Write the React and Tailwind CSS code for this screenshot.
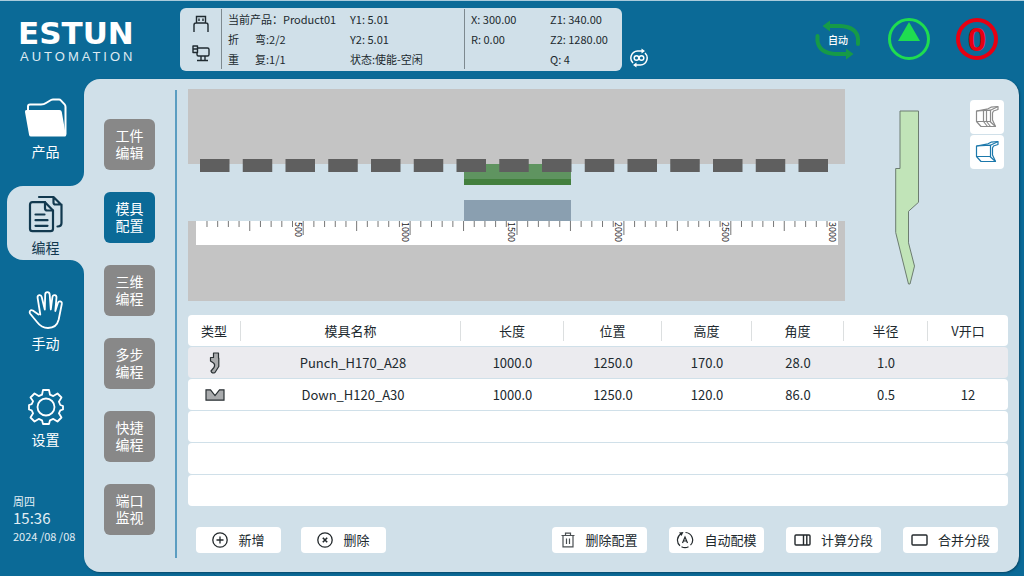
import { useState } from 'react';

const NAV_ITEMS = [
  { id: 'product', label: '产品', icon: FolderIcon },
  { id: 'program', label: '编程', icon: DocsIcon },
  { id: 'manual', label: '手动', icon: HandIcon },
  { id: 'settings', label: '设置', icon: GearIcon },
];

const MENU_ITEMS = [
  ['工件', '编辑'],
  ['模具', '配置'],
  ['三维', '编程'],
  ['多步', '编程'],
  ['快捷', '编程'],
  ['端口', '监视'],
];

const COLUMNS = [
  { label: '类型', width: 'w-[53px]' },
  { label: '模具名称', width: 'w-[220px]' },
  { label: '长度', width: 'w-[103px]' },
  { label: '位置', width: 'w-[98px]' },
  { label: '高度', width: 'w-[90px]' },
  { label: '角度', width: 'w-[92px]' },
  { label: '半径', width: 'w-[84px]' },
  { label: 'V开口', width: 'w-[80px]' },
];

const TOOLS = [
  { icon: PunchIcon, values: ['Punch_H170_A28', '1000.0', '1250.0', '170.0', '28.0', '1.0', ''] },
  { icon: DieIcon, values: ['Down_H120_A30', '1000.0', '1250.0', '120.0', '86.0', '0.5', '12'] },
];

const EMPTY_ROWS = 3;

function FolderIcon() {
  return (
    <svg width="44" height="40" viewBox="0 0 44 40" fill="none">
      <path d="M4 14V9.500q0-2 2-2h11q3 0 5-1.500l5-3q1-.600 2-.600h6q1 0 1.600.800l4 4.200q.900 1 .900 2.500V37q0 1-1 1.500" stroke="#fff" strokeWidth="2" />
      <path d="M2.500 13h33q2 0 2.300 2l4 23q.200 1.500-1.500 1.500H7q-1.600 0-1.900-1.500L1 15q-.300-2 1.500-2z" fill="#fff" />
    </svg>
  );
}

function DocsIcon() {
  return (
    <svg width="36" height="38" viewBox="0 0 36 38" fill="none" stroke="#12394f" strokeWidth="2.200" strokeLinecap="round" strokeLinejoin="round">
      <path d="M17 7.200H4.500q-2.500 0-2.500 2.500v24q0 2.500 2.500 2.500h18q2.500 0 2.500-2.500V15.500z" />
      <path d="M17 7.200v6q0 2.300 2.300 2.300H25M7.500 19.500h9M7.500 25.200h12M7.500 30.800h12" />
      <path d="M11 2h14.500l8 8v18q0 3.500-4 3.500M25.500 2v5.500q0 2 2 2h6" />
    </svg>
  );
}

function HandIcon() {
  return (
    <svg width="36" height="38" viewBox="0 0 36 38" fill="none" stroke="#fff" strokeWidth="1.800" strokeLinecap="round" strokeLinejoin="round">
      <path d="M10.500 23.500 4.800 19.600C2.500 18.200.900 20.500 2 22.500L9 31c3 4 6 6 11 6 6 0 9.500-3.500 10.700-8.500L33.800 13c.500-3-3.200-3.600-4-.800L27.300 20l1.200-13.500c.200-3-3.700-3.300-4.100-.300L22.800 18.500 21.700 3.600c-.300-3.200-4.400-3.200-4.500 0L16.800 18.500 13.700 6c-.700-2.900-4.500-2.100-4.100.800l2.700 16.700" />
    </svg>
  );
}

function GearIcon() {
  return (
    <svg width="36" height="36" viewBox="0 0 36 36" fill="none" stroke="#fff" strokeWidth="1.800" strokeLinejoin="round">
      <path d="M15 1h6l1 4.700 3.300 1.400L29.500 4.500l4 4-2.600 4.200 1.400 3.300L35 17v3.500l-2.700.800-1.400 3 2.600 4.200-4 4-4.200-2.600-3.300 1.400L21 35h-6l-1-3.700-3.300-1.400L6.500 32.500l-4-4 2.600-4.200-1.400-3L1 20.500V16l2.700-.800 1.400-3L2.500 8.500l4-4 4.200 2.600L14 5.700z" />
      <circle cx="18" cy="18" r="8.500" />
    </svg>
  );
}

function UsbIcon() {
  return (
    <svg width="18" height="18" viewBox="0 0 18 18" fill="none" stroke="#1f2a30" strokeWidth="1.400">
      <path d="M4.500 8V1.500h9V8M2 17v-7q0-2 2-2h10q2 0 2 2v7" />
      <path d="M7 3.500V6M11 3.500V6" />
    </svg>
  );
}

function NetworkIcon() {
  return (
    <svg width="18" height="18" viewBox="0 0 18 18" fill="none" stroke="#1f2a30" strokeWidth="1.400" strokeLinejoin="round">
      <path d="M6 3h9.500q1.500 0 1.500 1.500v5q0 1.500-1.500 1.500H6.500q-1.500 0-1.500-1.500V8M9 11v4M13 11v4M5 15.500h11" />
      <path d="M1 1h4.500v6.500H1zM1 4h4.500" />
    </svg>
  );
}

function LoopIcon() {
  return (
    <svg width="20" height="20" viewBox="0 0 20 20" fill="none" stroke="#fff" strokeWidth="1.500">
      <path d="M14 3H8.500a7 7 0 0 0-4.500 12M6 17h5.500A7 7 0 0 0 16 5" />
      <path d="M12.500.500 16 3l-3.500 2.500zM7.500 14.500 4 17l3.500 2.500z" fill="#fff" stroke="none" />
      <circle cx="7.500" cy="10" r="2.300" />
      <circle cx="12.500" cy="10" r="2.300" />
    </svg>
  );
}

function AutoArrows() {
  return (
    <svg width="48" height="42" viewBox="0 0 48 42" fill="none" stroke="#169a48" strokeWidth="4" strokeLinecap="round">
      <path d="M15 8h11q17 1 18 13v5" />
      <path d="M33 36H22Q5 35 3.500 23v-5" />
      <path d="M8.500 8 16 2.500v11zM39.500 36 32 30.500v11z" fill="#169a48" stroke="none" />
    </svg>
  );
}

function PunchIcon() {
  return (
    <svg width="12" height="22" viewBox="0 0 12 22" fill="#a9abad" stroke="#2a3134" strokeWidth="1.200" strokeLinejoin="round" className="mx-auto">
      <path d="M4.500 1h5v5h.300v8.500L6 20.500q-3 1.500-4-1.500l3-3.500q1.500-3-.500-4.500L1.500 9V5.500h3z" />
    </svg>
  );
}

function DieIcon() {
  return (
    <svg width="20" height="12" viewBox="0 0 20 12" fill="#a9abad" stroke="#2a3134" strokeWidth="1.200" className="mx-auto">
      <path d="M1 .800h4.500L10 6.500 14.500.800H19v10.400H1z" />
    </svg>
  );
}

function SegmentedToolIcon({ segmented }) {
  return (
    <svg width="24" height="24" viewBox="0 0 24 24" fill="none" stroke={segmented ? '#8b8b8b' : '#1c78ab'} strokeWidth="1.200" strokeLinejoin="round">
      <path d="M1.500 6 13 3.800 16 2.200l7-.700v3L18.500 6l-1 2v7l3 6.500H6l-4.500-5z" />
      <path d="M1.500 16.500H15l5.500 5M15.500 16.500V5.200L1.500 6M15.500 5.200 23 1.500" />
      {segmented && <path d="M8.500 4.800v11.700l4 5M11.500 4.300v12.200l4 5" />}
    </svg>
  );
}

function PlusCircleIcon() {
  return (
    <svg width="16" height="16" viewBox="0 0 16 16" fill="none" stroke="#23292c" strokeWidth="1.300">
      <circle cx="8" cy="8" r="7.200" />
      <path d="M8 4.500v7M4.500 8h7" />
    </svg>
  );
}

function CloseCircleIcon() {
  return (
    <svg width="16" height="16" viewBox="0 0 16 16" fill="none" stroke="#23292c" strokeWidth="1.300">
      <circle cx="8" cy="8" r="7.200" />
      <path d="m5.800 5.800 4.400 4.400M10.200 5.800l-4.400 4.400" strokeWidth="1.600" />
    </svg>
  );
}

function TrashIcon() {
  return (
    <svg width="14" height="16" viewBox="0 0 14 16" fill="none" stroke="#4a4f52" strokeWidth="1.200">
      <path d="M.500 3.500h13M4.500 3.500V1.200h5v2.300M2 3.500v11.300h10V3.500M5.500 6.500v5.500M8.500 6.500v5.500" />
    </svg>
  );
}

function AutoMatchIcon() {
  return (
    <svg width="18" height="18" viewBox="0 0 18 18" fill="none" stroke="#23292c" strokeWidth="1.200">
      <path d="M9.500 1.500a7.500 7.500 0 0 1 5 12.700M12.500 15.700a7.500 7.500 0 0 1-7 0M4 14.700A7.500 7.500 0 0 1 5 2.700" />
      <path d="M3 1.500 7.500 1 5.500 5z" fill="#23292c" stroke="none" />
      <path d="m6.500 12 2.500-6 2.500 6M7.300 10h3.400" />
    </svg>
  );
}

function SplitIcon() {
  return (
    <svg width="17" height="12" viewBox="0 0 17 12" fill="none" stroke="#23292c" strokeWidth="1.400">
      <rect x="1" y="1" width="15" height="10" rx="1" />
      <path d="M9.500 1v10M12.800 1v10" />
    </svg>
  );
}

function MergeIcon() {
  return (
    <svg width="17" height="12" viewBox="0 0 17 12" fill="none" stroke="#23292c" strokeWidth="1.400">
      <rect x="1" y="1" width="15" height="10" rx="1" />
    </svg>
  );
}

function StatusCard() {
  return (
    <div className="flex items-stretch rounded-md bg-[#d0e0e9] pt-px pb-0.5 text-[11px] leading-5 text-[#20292e]">
      <div className="flex w-[42px] flex-col items-center justify-around border-r border-[#7d898f]">
        <UsbIcon />
        <NetworkIcon />
      </div>
      <div className="w-[120px] pl-1.5 whitespace-nowrap">
        <p>当前产品：Product01</p>
        <p className="flex gap-4"><span>折</span><span>弯:2/2</span></p>
        <p className="flex gap-4"><span>重</span><span>复:1/1</span></p>
      </div>
      <div className="w-[123px] border-r border-[#7d898f] pl-2">
        <p>Y1: 5.01</p>
        <p>Y2: 5.01</p>
        <p>状态:使能-空闲</p>
      </div>
      <div className="w-[79px] pl-1.5">
        <p>X: 300.00</p>
        <p>R: 0.00</p>
      </div>
      <div className="w-[78px] pl-1.5">
        <p>Z1: 340.00</p>
        <p>Z2: 1280.00</p>
        <p>Q: 4</p>
      </div>
    </div>
  );
}

function Header() {
  return (
    <header className="flex h-[78px] items-start pr-[26px]">
      <div className="w-[180px] shrink-0 pt-4 pl-[18px] text-white">
        <h1 className="font-['DejaVu_Sans',sans-serif] text-[31px] leading-8 font-bold">ESTUN</h1>
        <p className="pl-0.5 font-['Liberation_Sans',sans-serif] text-[13px] leading-4 tracking-[3px] text-[#dfebf2]">AUTOMATION</p>
      </div>
      <div className="pt-[7px]">
        <StatusCard />
      </div>
      <button aria-label="循环" className="mt-[47px] ml-[7px]">
        <LoopIcon />
      </button>
      <div className="ml-auto flex items-center gap-[26px] pt-[17px]">
        <button className="relative">
          <AutoArrows />
          <span className="absolute inset-0 flex items-center justify-center text-[10px] font-medium text-white">自动</span>
        </button>
        <button aria-label="启动">
          <svg width="42" height="42" viewBox="0 0 42 42">
            <circle cx="21" cy="21" r="19.500" fill="none" stroke="#1fdc50" strokeWidth="3" />
            <path d="M21 4 32 23H10z" fill="#1fdc50" />
          </svg>
        </button>
        <button className="flex size-[42px] items-center justify-center rounded-full border-4 border-[#e60012] font-['Liberation_Sans',sans-serif] text-[34px] leading-none font-bold text-[#e60012]">
          0
        </button>
      </div>
    </header>
  );
}

// Fills the inside corner where the active tab meets the main panel
function TabCorner({ className }) {
  return (
    <svg width="14" height="14" viewBox="0 0 14 14" className={`absolute right-0 ${className}`}>
      <path d="M14 0v14H0A14 14 0 0 0 14 0z" fill="#d0e0e9" />
    </svg>
  );
}

function Sidebar() {
  const [active, setActive] = useState('program');

  return (
    <aside className="flex w-[84px] shrink-0 flex-col justify-between pb-[30px] text-white">
      <nav className="flex flex-col gap-[22px] pt-[11px] pl-[7px]">
        {NAV_ITEMS.map(({ id, label, icon: Icon }) => (
          <button
            key={id}
            onClick={() => setActive(id)}
            className={`relative flex h-[74px] flex-col items-center justify-end gap-1 pb-[3px] text-[14px] leading-5 ${
              active === id ? 'rounded-l-2xl bg-[#d0e0e9] text-[#12394f]' : ''
            }`}
          >
            {active === id && (
              <>
                <TabCorner className="-top-3.5" />
                <TabCorner className="-bottom-3.5 -scale-y-100" />
              </>
            )}
            <Icon />
            {label}
          </button>
        ))}
      </nav>
      <div className="pl-[13px] whitespace-nowrap text-[#e3eef4]">
        <p className="font-['Liberation_Sans','Noto_Sans_CJK_SC',sans-serif] text-[11px] leading-4">周四</p>
        <p className="text-[15px] leading-4">15:36</p>
        <p className="text-[11px] leading-5">2024 /08 /08</p>
      </div>
    </aside>
  );
}

function BendingDrawing() {
  const clamps = Array.from({ length: 15 }, (_, i) => 12 + i * 42.75);
  const ticks = Array.from({ length: 59 }, (_, i) => i + 1);

  return (
    <svg viewBox="0 0 657 212" className="min-w-0 flex-1">
      <rect width="657" height="75" fill="#c4c4c4" />
      <rect x="276" y="75" width="107" height="21" fill="#5f9460" />
      <rect x="276" y="90" width="107" height="6" fill="#437f3e" />
      {clamps.map((x) => (
        <rect key={x} x={x} y="70" width="29.500" height="13" fill="#5f5f5f" />
      ))}
      <rect x="276" y="111" width="107" height="21" fill="#8a9fb0" />
      <rect y="132" width="657" height="80" fill="#c4c4c4" />
      <rect x="8" y="132" width="642" height="24" fill="#fff" />
      {ticks.map((n) => {
        const x = 8.300 + n * 10.690;
        const length = n % 10 === 0 ? 14 : n % 5 === 0 ? 10 : 6;
        return <path key={n} d={`M${x} 132v${length}`} stroke="#777" />;
      })}
      {[500, 1000, 1500, 2000, 2500, 3000].map((value) => (
        <text
          key={value}
          transform={`translate(${value * 0.2135} 133) rotate(90)`}
          fill="#222"
          className="text-[9px]"
        >
          {value}
        </text>
      ))}
    </svg>
  );
}

function ToolPreview() {
  const [view, setView] = useState('single');

  return (
    <div className="flex w-[163px] shrink-0 items-start justify-between pr-1 pl-[50px]">
      <svg width="25" height="176" viewBox="0 0 25 176" className="mt-[21px]">
        <path d="M5 1h18.500v91.300l-10 9v31.500l6 23.300L15 174h-1.500L.700 122.500v-64H5z" fill="#c1e4b8" stroke="#6c7c70" />
      </svg>
      <div className="mt-[11px] flex flex-col gap-px">
        {['segmented', 'single'].map((v) => (
          <button
            key={v}
            aria-label={v === 'segmented' ? '分段视图' : '整体视图'}
            aria-pressed={view === v}
            onClick={() => setView(v)}
            className="flex size-[34px] items-center justify-center rounded-sm bg-white"
          >
            <SegmentedToolIcon segmented={v === 'segmented'} />
          </button>
        ))}
      </div>
    </div>
  );
}

function ToolTable() {
  return (
    <table className="mt-[13px] w-full table-fixed border-separate border-spacing-x-0 border-spacing-y-px text-[13px] leading-5 text-[#20292e]">
      <thead>
        <tr>
          {COLUMNS.map((col, i) => (
            <th
              key={col.label}
              scope="col"
              className={`${col.width} h-[31px] bg-white p-0 font-normal first:rounded-l-sm last:rounded-r-sm`}
            >
              <div className={i < COLUMNS.length - 1 ? 'border-r border-[#dcdfe0]' : ''}>{col.label}</div>
            </th>
          ))}
        </tr>
      </thead>
      <tbody>
        {TOOLS.map(({ icon: Icon, values }, row) => (
          <tr key={values[0]} className={row === 0 ? 'bg-[#ebebef]' : 'bg-white'}>
            <td className="h-[31px] rounded-l-sm p-0"><Icon /></td>
            {values.map((value, i) => (
              <td key={i} className={`h-[31px] p-0 text-center last:rounded-r-sm ${i === 0 ? 'pl-1' : ''}`}>{value}</td>
            ))}
          </tr>
        ))}
        {Array.from({ length: EMPTY_ROWS }, (_, i) => (
          <tr key={i}>
            <td colSpan={COLUMNS.length} className="h-[31px] rounded-sm bg-white p-0" />
          </tr>
        ))}
      </tbody>
    </table>
  );
}

function ActionButton({ icon: Icon, width, children }) {
  return (
    <button className={`flex h-[26px] items-center justify-center gap-2.5 rounded-sm bg-white text-[13px] whitespace-nowrap text-[#20292e] ${width}`}>
      <Icon />
      {children}
    </button>
  );
}

export default function App() {
  const [menu, setMenu] = useState('模具');

  return (
    <div className="flex min-h-screen flex-col border-t border-[#a9cbdc] bg-[#0b6a97] font-['Noto_Sans_CJK_SC','Noto_Sans',sans-serif]">
      <Header />
      <div className="flex flex-1">
        <Sidebar />
        <main className="mr-[5px] mb-1 flex min-w-0 flex-1 rounded-2xl bg-[#d0e0e9] pr-[11px] pl-5 shadow-[1px_1px_2px_#07496a]">
          {/* Programming menu */}
          <nav className="flex shrink-0 flex-col gap-[22px] pt-10">
            {MENU_ITEMS.map(([top, bottom]) => (
              <button
                key={top}
                onClick={() => setMenu(top)}
                className={`size-[51px] rounded-md font-['Liberation_Sans','Noto_Sans_CJK_SC',sans-serif] text-[14px] leading-[17px] text-white ${
                  menu === top ? 'bg-[#0b6a97]' : 'bg-[#888888]'
                }`}
              >
                {top}
                <br />
                {bottom}
              </button>
            ))}
          </nav>
          <div className="mt-[11px] mr-[11px] mb-3.5 ml-5 w-0.5 shrink-0 bg-[#5b9dc1]" />

          {/* Tool setup */}
          <section className="flex min-w-0 flex-1 flex-col pt-2.5 pb-[19px]">
            <div className="flex">
              <BendingDrawing />
              <ToolPreview />
            </div>
            <ToolTable />
            <div className="mt-auto flex justify-between pr-2.5 pl-2">
              <div className="flex gap-5">
                <ActionButton icon={PlusCircleIcon} width="w-[85px]">新增</ActionButton>
                <ActionButton icon={CloseCircleIcon} width="w-[85px]">删除</ActionButton>
              </div>
              <div className="flex gap-[22px]">
                <ActionButton icon={TrashIcon} width="w-[95px]">删除配置</ActionButton>
                <ActionButton icon={AutoMatchIcon} width="w-[95px]">自动配模</ActionButton>
                <ActionButton icon={SplitIcon} width="w-[95px]">计算分段</ActionButton>
                <ActionButton icon={MergeIcon} width="w-[95px]">合并分段</ActionButton>
              </div>
            </div>
          </section>
        </main>
      </div>
    </div>
  );
}
